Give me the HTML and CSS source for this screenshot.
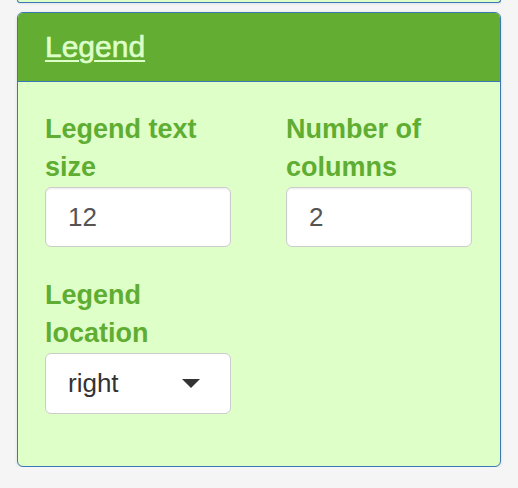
FILE: index.html
```html
<!DOCTYPE html>
<html>
<head>
<meta charset="utf-8">
<link rel="stylesheet" href="styles.css">
</head>
<body>
<div class="page">
  <div class="prev-panel"></div>
  <div class="panel">
    <div class="panel-heading">
      <a class="panel-title" href="#">Legend</a>
    </div>
    <div class="panel-body">
      <div class="row">
        <div class="form-group">
          <label class="label">Legend text size</label>
          <div class="input">12</div>
        </div>
        <div class="form-group">
          <label class="label">Number of columns</label>
          <div class="input">2</div>
        </div>
      </div>
      <div class="row">
        <div class="form-group">
          <label class="label">Legend location</label>
          <div class="select"><span class="select-value">right</span><span class="caret"></span></div>
        </div>
      </div>
    </div>
  </div>
</div>
</body>
</html>
```
FILE: styles.css
```css
html, body {
  margin: 0;
  padding: 0;
  background: #f5f5f5;
  font-family: "Liberation Sans", Arial, sans-serif;
}
.page {
  padding-left: 17px;
  width: 484px;
}
.prev-panel {
  height: 2px;
  background: #dfffc8;
  border: 1px solid #3a78b8;
  border-top: none;
  border-radius: 0 0 6px 6px;
  box-shadow: 0 1px 2px rgba(0,0,0,0.08);
}
.panel {
  margin-top: 9px;
  border: 1px solid #3a78b8;
  border-radius: 6px;
  overflow: hidden;
  box-shadow: 0 1px 3px rgba(0,0,0,0.12);
  background: #dfffc8;
}
.panel-heading {
  height: 68px;
  background: #62ad32;
  border-bottom: 1px solid #3a78b8;
  display: flex;
  align-items: center;
  padding-left: 27px;
}
.panel-title {
  font-size: 30px;
  line-height: 30px;
  color: #ddffca;
  -webkit-text-stroke: 0.6px #ddffca;
  text-decoration: underline;
  text-decoration-thickness: 2px;
  text-underline-offset: 3px;
}
.panel-body {
  padding: 28px 27px 23px 27px;
}
.row {
  display: grid;
  grid-template-columns: 186px 186px;
  column-gap: 55px;
}
.form-group {
  margin-bottom: 29px;
}
.label {
  display: block;
  font-weight: bold;
  font-size: 27px;
  line-height: 38px;
  color: #5fad32;
}
.input {
  height: 58px;
  margin-top: 1px;
  border: 1px solid #cccccc;
  border-radius: 6px;
  background: #ffffff;
  box-shadow: inset 0 1px 2px rgba(0,0,0,0.075);
  box-sizing: content-box;
  display: flex;
  align-items: center;
  padding: 0 22px;
  font-size: 26px;
  color: #555555;
  width: 140px;
}
.select {
  height: 59px;
  margin-top: 1px;
  border: 1px solid #cccccc;
  border-radius: 6px;
  background: #ffffff;
  display: flex;
  align-items: center;
  justify-content: space-between;
  padding: 0 30px 0 22px;
  font-size: 26px;
  color: #333333;
}
.caret {
  width: 0;
  height: 0;
  border-left: 9px solid transparent;
  border-right: 9px solid transparent;
  border-top: 9px solid #333333;
}
```
